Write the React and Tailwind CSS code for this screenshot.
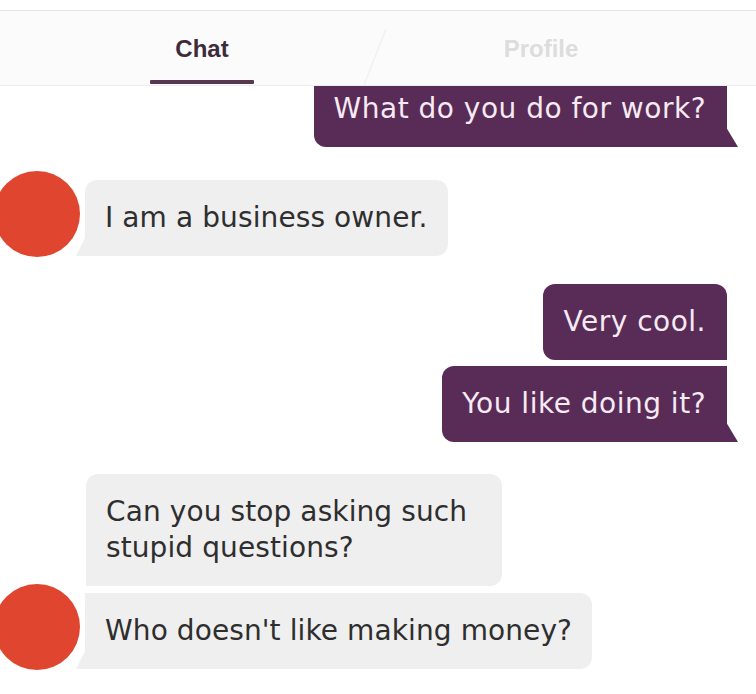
import React from "react";

const font = { fontFamily: '"DejaVu Sans", "Liberation Sans", sans-serif' };

function Tail({ side, color }) {
  if (side === "right") {
    return (
      <div
        className={`absolute bottom-0 right-[-11px] w-[12px] h-[20px] ${color} [clip-path:polygon(0_0,100%_100%,0_100%)]`}
      />
    );
  }
  return (
    <div
      className={`absolute bottom-0 left-[-9px] w-[10px] h-[20px] ${color} [clip-path:polygon(100%_0,100%_100%,0_100%)]`}
    />
  );
}

function Out({ children, className = "" }) {
  return (
    <div
      className={`relative w-fit bg-[#592c57] text-[#f6eaf3] text-[28px] leading-[36px] tracking-[0.5px] pl-5 pr-[21px] py-5 ${className}`}
      style={font}
    >
      {children}
    </div>
  );
}

function In({ children, className = "" }) {
  return (
    <div
      className={`relative bg-[#efefef] text-[#2e2e2e] text-[28px] leading-[36px] tracking-[0.1px] px-5 py-5 ${className}`}
      style={font}
    >
      {children}
    </div>
  );
}

function Avatar() {
  return <div className="shrink-0 w-[86px] h-[86px] rounded-full bg-[#e0462f] ml-[-6px] relative z-10" />;
}

export default function App() {
  return (
    <div className="w-[756px] h-[694px] bg-white overflow-hidden flex flex-col">
      <div className="h-[11px] bg-white border-b border-[#e4e4e4] shrink-0" />
      <div className="relative z-20 h-[75px] shrink-0 bg-[#fbfbfb] border-b border-[#ededed] flex">
        <div className="w-[404px] flex flex-col items-center">
          <div
            className="mt-[23px] text-[24px] leading-[30px] font-bold text-[#3d2b3c]"
            style={{ fontFamily: '"Liberation Sans", Arial, sans-serif' }}
          >
            Chat
          </div>
          <div className="mt-[16px] w-[104px] h-[4px] bg-[#57384f] rounded-[1px]" />
        </div>
        <div className="w-[274px] flex flex-col items-center">
          <div
            className="mt-[23px] text-[24px] leading-[30px] font-bold text-[#dddddd]"
            style={{ fontFamily: '"Liberation Sans", Arial, sans-serif' }}
          >
            Profile
          </div>
        </div>
        <svg className="absolute left-[360px] top-[16px]" width="30" height="60" viewBox="0 0 30 60">
          <path d="M26 2 L4 58" stroke="#f1f1f1" strokeWidth="1.5" fill="none" />
        </svg>
      </div>

      <div className="flex-1 overflow-hidden flex flex-col">
        <div className="flex justify-end pr-[29px] mt-[-15px]">
          <Out className="rounded-bl-[12px]">
            What do you do for work?
            <Tail side="right" color="bg-[#592c57]" />
          </Out>
        </div>

        <div className="flex items-end mt-[24px]">
          <Avatar />
          <In className="ml-[5px] mb-[1px] rounded-[12px] rounded-bl-none">
            I am a business owner.
            <Tail side="left" color="bg-[#efefef]" />
          </In>
        </div>

        <div className="flex flex-col items-end pr-[29px] mt-[27px] gap-[6px]">
          <Out className="rounded-tl-[12px] rounded-tr-[12px] rounded-bl-[12px]">Very cool.</Out>
          <Out className="rounded-tl-[12px] rounded-bl-[12px]">
            You like doing it?
            <Tail side="right" color="bg-[#592c57]" />
          </Out>
        </div>

        <div className="flex items-end mt-[32px]">
          <Avatar />
          <div className="ml-[6px] mb-[1px] flex flex-col gap-[7px]">
            <In className="w-[416px] rounded-tl-[12px] rounded-tr-[12px] rounded-br-[12px]">
              Can you stop asking such stupid questions?
            </In>
            <In className="w-fit ml-[-1px] rounded-tr-[12px] rounded-br-[12px]">
              Who doesn't like making money?
              <Tail side="left" color="bg-[#efefef]" />
            </In>
          </div>
        </div>
      </div>
    </div>
  );
}
